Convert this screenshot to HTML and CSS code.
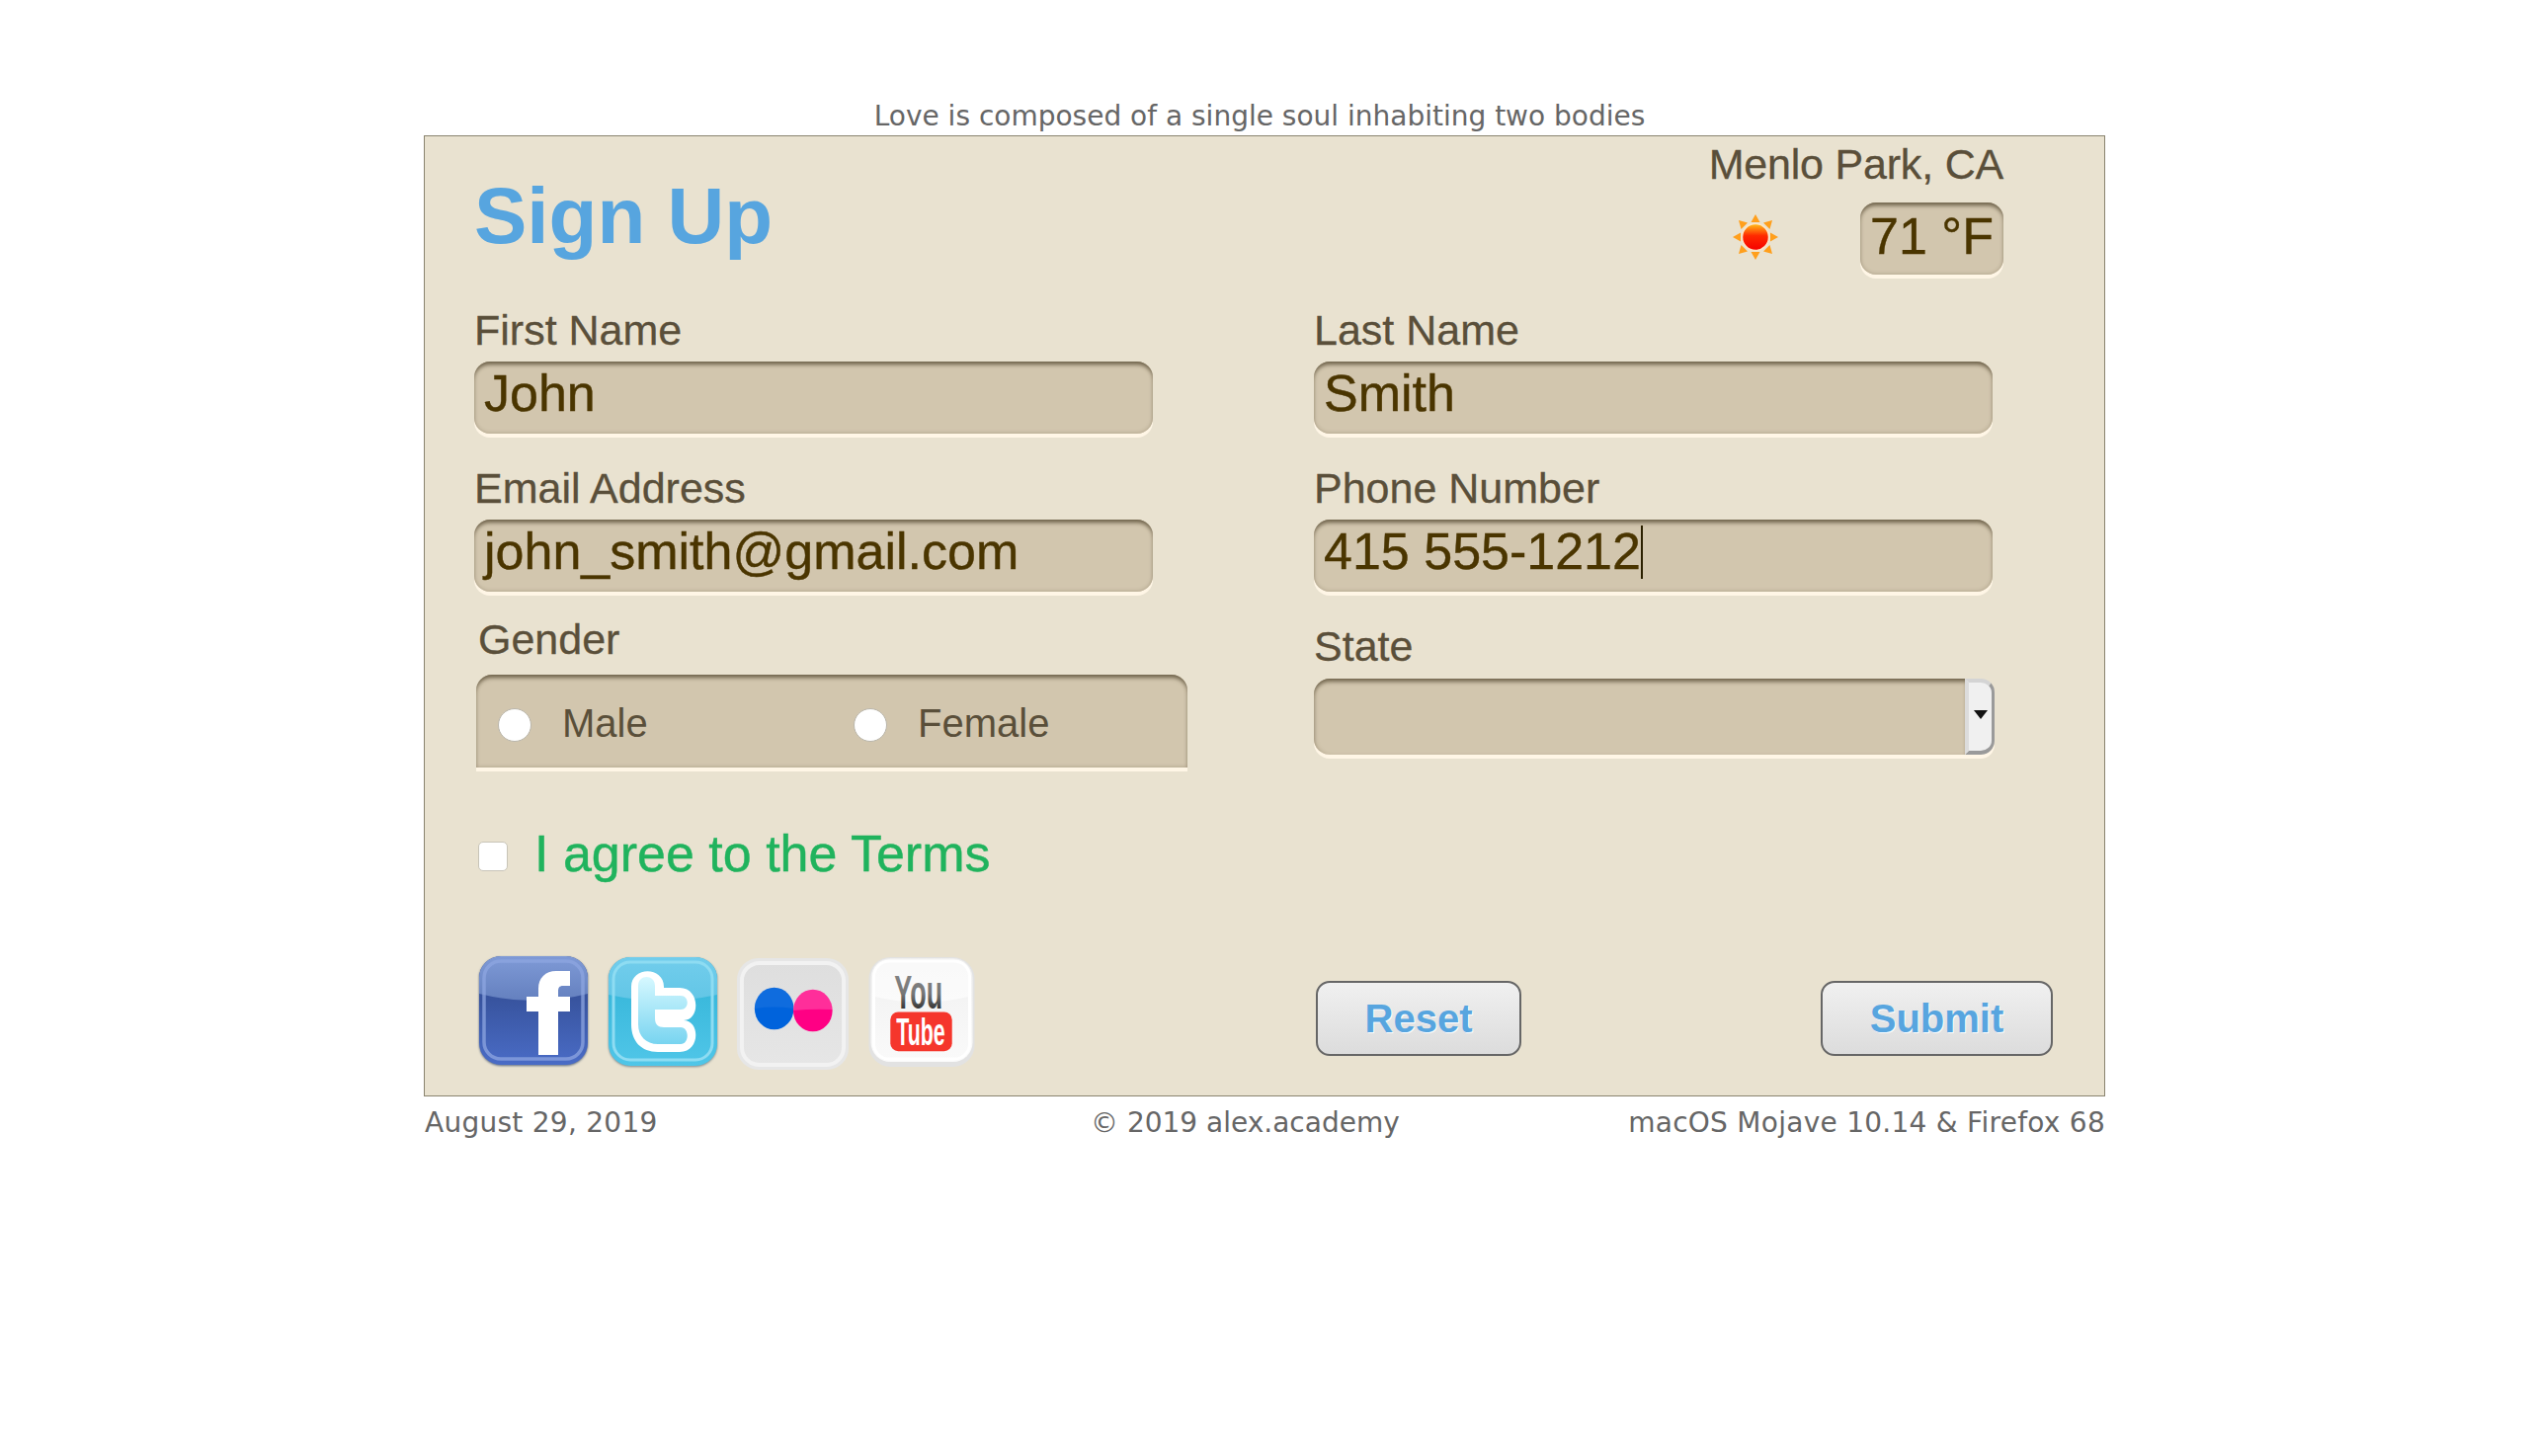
FILE: index.html
```html
<!DOCTYPE html>
<html lang="en">
<head>
<meta charset="utf-8">
<title>Sign Up</title>
<link rel="stylesheet" href="styles.css">
</head>
<body>
<main class="page">
  <p class="quote">Love is composed of a single soul inhabiting two bodies</p>
  <form class="card">
    <header class="card-head">
      <h1 class="title">Sign Up</h1>
      <div class="weather">
        <div class="city">Menlo Park, CA</div>
        <div class="weather-row">
          <svg class="sun" viewBox="0 0 46 46" aria-hidden="true">
            <defs>
              <linearGradient id="sunfill" x1="0" y1="0" x2="0" y2="1">
                <stop offset="0" stop-color="#ffc21a"/>
                <stop offset=".45" stop-color="#ff2a00"/>
                <stop offset="1" stop-color="#f50000"/>
              </linearGradient>
            </defs>
            <g fill="#ff9f1c">
              <path d="M23 0l4.500 8h-9z"/><path d="M23 46l-4.500-8h9z"/>
              <path d="M0 23l8-4.500v9z"/><path d="M46 23l-8 4.500v-9z"/>
              <path d="M6 6l9 2.500-6.500 6.500z"/><path d="M40 6l-2.500 9-6.500-6.500z"/>
              <path d="M6 40l2.500-9 6.500 6.500z"/><path d="M40 40l-9-2.500 6.500-6.500z"/>
            </g>
            <circle cx="23" cy="23" r="13.500" fill="url(#sunfill)" stroke="#ffe6c4" stroke-width="1.500"/>
          </svg>
          <output class="temp">71 °F</output>
        </div>
      </div>
    </header>
    <div class="cols">
      <div class="col col-left">
        <div class="field">
          <label class="label">First Name</label>
          <div class="input">John</div>
        </div>
        <div class="field">
          <label class="label">Email Address</label>
          <div class="input">john_smith@gmail.com</div>
        </div>
        <div class="gender">
          <div class="label label-gender">Gender</div>
          <div class="radios">
            <label class="radio-item"><input class="radio" type="radio" name="gender"><span>Male</span></label>
            <label class="radio-item"><input class="radio" type="radio" name="gender"><span>Female</span></label>
          </div>
        </div>
        <label class="terms"><input class="check" type="checkbox"><span>I agree to the Terms</span></label>
        <div class="social">
          <svg class="icon icon-fb" viewBox="0 0 110 110" aria-label="Facebook">
            <defs>
              <linearGradient id="fbbg" x1="0" y1="0" x2="0" y2="1">
                <stop offset="0" stop-color="#324f98"/><stop offset=".4" stop-color="#38549f"/><stop offset="1" stop-color="#4a6cc6"/>
              </linearGradient>
              <linearGradient id="fbgl" x1="0" y1="0" x2="0" y2="1">
                <stop offset="0" stop-color="#7f9ad6"/><stop offset="1" stop-color="#6480bf"/>
              </linearGradient>
              <linearGradient id="twbg" x1="0" y1="0" x2="0" y2="1">
                <stop offset="0" stop-color="#2fb2d6"/><stop offset="1" stop-color="#50c6e8"/>
              </linearGradient>
              <linearGradient id="twgl" x1="0" y1="0" x2="0" y2="1">
                <stop offset="0" stop-color="#72cdec"/><stop offset="1" stop-color="#62c6e6"/>
              </linearGradient>
              <linearGradient id="twin" x1="0" y1="0" x2="0" y2="1">
                <stop offset="0" stop-color="#d6f8ff"/><stop offset="1" stop-color="#78d4f0"/>
              </linearGradient>
              <linearGradient id="flbg" x1="0" y1="0" x2="0" y2="1">
                <stop offset="0" stop-color="#dedede"/><stop offset="1" stop-color="#e6e6e6"/>
              </linearGradient>
              <linearGradient id="ytbg" x1="0" y1="0" x2="0" y2="1">
                <stop offset="0" stop-color="#f0f0f0"/><stop offset="1" stop-color="#fafafa"/>
              </linearGradient>
              <linearGradient id="yttext" x1="0" y1="0" x2="0" y2="1">
                <stop offset="0" stop-color="#8a8a8a"/><stop offset=".55" stop-color="#777"/><stop offset="1" stop-color="#111"/>
              </linearGradient>
            </defs>
            <rect x="0" y="0" width="110" height="110" rx="22" fill="url(#fbbg)"/>
            <path d="M0 22a22 22 0 0 1 22-22h66a22 22 0 0 1 22 22v16q-55 14-110 0z" fill="url(#fbgl)"/>
            <rect x="5" y="5" width="100" height="99" rx="17" fill="none" stroke="#8ea6e0" stroke-opacity=".75" stroke-width="3.500"/>
            <path d="M60 100V56H48V41h12v-8c0-11 7-18 18-18h14v15h-7c-4 0-5 2-5 6v5h12v15H80v44z" fill="#fff"/>
          </svg>
          <svg class="icon icon-tw" viewBox="0 0 110 110" aria-label="Twitter">
            <rect x="0" y="0" width="110" height="110" rx="22" fill="url(#twbg)"/>
            <path d="M0 22a22 22 0 0 1 22-22h66a22 22 0 0 1 22 22v16q-55 12-110 0z" fill="url(#twgl)"/>
            <rect x="5" y="5" width="100" height="99" rx="17" fill="none" stroke="#8edcf2" stroke-width="3"/>
            <path d="M23 30c0-21 33-21 33 0v1h16c21 0 21 33 4 33c17 0 17 32-4 32H50C33 96 23 85 23 68z" fill="#fff"/>
            <path d="M30 29c0-12 17-12 17 0v10h26c9 0 9 14 0 14H47v9c0 6 3 9 9 9h17c9 0 9 17 0 17H50C38 88 30 80 30 68z" fill="url(#twin)"/>
          </svg>
          <svg class="icon icon-fl" viewBox="0 0 114 114" aria-label="Flickr">
            <rect x="0" y="0" width="114" height="114" rx="22" fill="#e6e6e6"/>
            <rect x="5" y="5" width="104" height="104" rx="18" fill="url(#flbg)" stroke="#f2f2f2" stroke-width="4"/>
            <ellipse cx="38" cy="51.500" rx="20" ry="21.500" fill="#0063dc"/>
            <ellipse cx="77.500" cy="53.500" rx="20" ry="21.500" fill="#ff0084"/>
            <path d="M18 51.500a20 21.500 0 0 1 40 0q-20-3-40 0z" fill="#fff" fill-opacity=".06"/>
            <path d="M57.500 53.500a20 21.500 0 0 1 40-1q-20-1-40 1z" fill="#fff" fill-opacity=".18"/>
          </svg>
          <svg class="icon icon-yt" viewBox="0 0 108 112" aria-label="YouTube">
            <rect x="0" y="0" width="108" height="112" rx="22" fill="#e2e2e2"/>
            <rect x="2" y="1" width="104" height="106" rx="20" fill="url(#ytbg)"/>
            <rect x="5" y="4" width="98" height="100" rx="16" fill="none" stroke="#fff" stroke-width="3"/>
            <path d="M5 20a15 15 0 0 1 15-15h68a15 15 0 0 1 15 15v20q-49 12-98 0z" fill="#fff" fill-opacity=".6"/>
            <text class="yt-you" transform="translate(26 52) scale(.554 1)" fill="url(#yttext)">You</text>
            <rect x="22" y="56" width="63" height="40" rx="8" fill="#f5362c"/>
            <text class="yt-tube" transform="translate(28 90) scale(.553 1)" fill="#fff">Tube</text>
          </svg>
        </div>
      </div>
      <div class="col col-right">
        <div class="field">
          <label class="label">Last Name</label>
          <div class="input">Smith</div>
        </div>
        <div class="field">
          <label class="label">Phone Number</label>
          <div class="input">415 555-1212<span class="caret"></span></div>
        </div>
        <div class="field">
          <label class="label">State</label>
          <div class="select"><div class="select-main"></div><div class="select-btn"><span class="arrow"></span></div></div>
        </div>
        <div class="actions">
          <button class="btn btn-reset" type="reset">Reset</button>
          <button class="btn btn-submit" type="button">Submit</button>
        </div>
      </div>
    </div>
  </form>
  <footer class="foot">
    <span class="foot-side">August 29, 2019</span>
    <span>© 2019 alex.academy</span>
    <span class="foot-side foot-right">macOS Mojave 10.14 &amp; Firefox 68</span>
  </footer>
</main>
</body>
</html>
```
FILE: styles.css
```css
* { box-sizing: border-box; }
html, body { margin: 0; padding: 0; background: #fff; }
body { font-family: "Liberation Sans", Arial, sans-serif; }

.page { width: 1702px; margin: 0 auto; }

.quote {
  margin: 0;
  padding: 101px 10px 0 0;
  height: 137px;
  font: 28px/34px "DejaVu Sans", Verdana, sans-serif;
  color: #666;
  text-align: center;
}

.card {
  height: 973px;
  background: #e9e2d0;
  border: 1px solid #8a846f;
  padding: 0 52px 0 50px;
  display: flex;
  flex-direction: column;
}

.card-head { display: flex; justify-content: space-between; height: 170px; }

.title {
  margin: 34px 0 0;
  font-size: 80px;
  line-height: 94px;
  font-weight: 700;
  color: #57a5df;
}

.weather { margin-right: 50px; text-align: right; }
.city { font-size: 43px; letter-spacing: -0.2px; line-height: 50px; margin-top: 3px; color: #5a4f3a; -webkit-text-stroke: 0.3px #5a4f3a; }
.weather-row { display: flex; align-items: center; justify-content: flex-end; margin-top: 14px; }
.sun { width: 46px; height: 46px; margin: 0 83px 4px 0; }
.temp {
  display: block;
  width: 145px;
  height: 73px;
  border-radius: 16px;
  background: #d2c6ae;
  box-shadow: inset 0 5px 4px -2px #6f634b, inset 0 0 4px #a99d85, 0 4px 0 #fff6e6;
  font-size: 52px;
  line-height: 68px;
  text-align: center;
  color: #4a3500;
  -webkit-text-stroke: 0.4px #4a3500;
}

.cols { display: flex; flex: 1; }
.col { display: flex; flex-direction: column; }
.col-left { width: 850px; }
.col-right { flex: 1; }

.field { margin-bottom: 29px; }
.label { display: block; font-size: 43px; line-height: 50px; padding-top: 1px; color: #5a4f3a; -webkit-text-stroke: 0.3px #5a4f3a; }
.field .label { height: 58px; }

.input {
  width: 687px;
  height: 73px;
  border-radius: 16px;
  background: #d2c6ae;
  box-shadow: inset 0 5px 4px -2px #6f634b, inset 0 0 4px #a99d85, 0 4px 0 #fff6e6;
  padding-left: 10px;
  font-size: 52px;
  line-height: 64px;
  color: #4a3500;
  white-space: nowrap;
  -webkit-text-stroke: 0.4px #4a3500;
}
.caret { display: inline-block; width: 2px; height: 54px; background: #2b2000; vertical-align: -10px; }

.gender { margin-top: -7px; }
.label-gender { margin-left: 4px; height: 62px; }
.radios {
  display: flex;
  width: 720px;
  height: 98px;
  margin-left: 2px;
  padding-top: 8px;
  border-radius: 16px 16px 0 0;
  background: #d2c6ae;
  box-shadow: inset 0 5px 4px -2px #6f634b, inset 0 0 4px #a99d85;
  border-bottom: 4px solid #fff6e6;
}
.radio-item { display: flex; align-items: center; width: 360px; padding-left: 22px; font-size: 40px; color: #5a4f3a; }
.radio-item span { margin-left: 31px; margin-top: -4px; }
.radio {
  appearance: none;
  width: 34px;
  height: 34px;
  margin: 0;
  border-radius: 50%;
  background: #fff;
  border: 1px solid #b9b5aa;
}

.terms { display: flex; align-items: center; margin: 53px 0 0 4px; font-size: 52px; line-height: 60px; color: #20b35d; -webkit-text-stroke: 0.4px #20b35d; }
.check {
  appearance: none;
  width: 30px;
  height: 30px;
  margin: 6px 27px 0 0;
  border-radius: 5px;
  background: #fff;
  border: 1px solid #c8c4b8;
}

.social { display: flex; align-items: flex-start; margin: 74px 0 0 5px; }
.icon { display: block; flex: none; }
.icon-fb { width: 110px; height: 110px; filter: drop-shadow(0 1px 1px #5b6a80); }
.icon-tw { width: 110px; height: 110px; margin: 1px 0 0 21px; filter: drop-shadow(0 1px 1px #7a8a90); }
.icon-fl { width: 113px; height: 113px; margin: 2px 0 0 20px; }
.icon-yt { width: 108px; height: 111px; margin: 1px 0 0 20px; }
.yt-you { font: 700 49px "Liberation Sans", sans-serif; }
.yt-tube { font: 700 39px "Liberation Sans", sans-serif; }

.select { display: flex; width: 689px; height: 77px; margin-top: 1px; }
.select-main {
  flex: 1;
  border-radius: 16px 0 0 16px;
  background: #d2c6ae;
  box-shadow: inset 0 5px 4px -2px #6f634b, inset 3px 0 4px -2px #a99d85, 0 4px 0 #fff6e6;
}
.select-btn {
  width: 30px;
  display: flex;
  align-items: center;
  justify-content: center;
  background: #f0f0f0;
  border-style: solid;
  border-width: 4px 3px 4px 4px;
  border-color: #d4d4d4 #9a9a9a #9a9a9a #dcdcdc;
  border-radius: 0 14px 14px 0;
  box-shadow: 0 4px 0 #fff6e6;
  padding-bottom: 4px;
}
.arrow { width: 0; height: 0; border: 7px solid transparent; border-top: 9px solid #111; border-bottom: 0; }

.actions { display: flex; justify-content: space-between; margin-top: auto; margin-bottom: 40px; padding-left: 2px; }
.btn {
  height: 76px;
  border: 2px solid #666;
  border-radius: 14px;
  background: linear-gradient(#f0f0f0, #dcdcdc);
  font: 700 40px "Liberation Sans", sans-serif;
  color: #57a5df;
  text-shadow: 1px 1px 0 #fff;
  padding: 0;
}
.btn-reset { width: 208px; }
.btn-submit { width: 235px; }

.foot {
  display: grid;
  grid-template-columns: 674px auto 1fr;
  font: 28px/34px "DejaVu Sans", Verdana, sans-serif;
  color: #666;
  padding-top: 10px;
  padding-left: 1px;
}
.foot-side { letter-spacing: 0.27px; }
.foot-right { text-align: right; }
```
